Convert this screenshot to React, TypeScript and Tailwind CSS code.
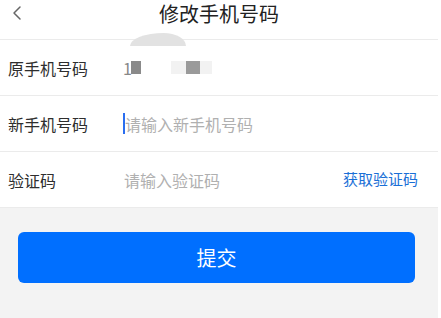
import { ChevronLeft } from 'lucide-react';

const font = { fontFamily: '"Noto Sans CJK SC", "Noto Sans", sans-serif' };

function Row({ label, children }: { label: string; children: React.ReactNode }) {
  return (
    <div className="flex items-center h-[56px] bg-white border-b border-[#ebebeb]">
      <div className="w-[123px] pl-[8px] text-[16px] text-[#2e2e2e]">{label}</div>
      <div className="flex-1 flex items-center min-w-0">{children}</div>
    </div>
  );
}

export default function App() {
  return (
    <div className="flex w-[441px] h-[318px] bg-white overflow-hidden" style={font}>
      <div className="w-[438px] h-full bg-[#f3f3f3] flex flex-col">
        {/* Header */}
        <div className="relative h-[40px] bg-white border-b border-[#ebebeb] flex justify-center pt-[3px]">
          <ChevronLeft className="absolute left-[5px] top-[1px] w-[24px] h-[24px] text-[#666]" strokeWidth={1.5} />
          <h1 className="text-[20px] text-[#222] leading-[22px]">修改手机号码</h1>
        </div>

        {/* Form */}
        <div className="relative">
          <div className="absolute left-[130px] top-[-7px] w-[56px] h-[13px] rounded-[60%_40%_0_0/100%_100%_0_0] bg-[#e2e2e2]" />
          <Row label="原手机号码">
            <span className="text-[16px] text-[#888]">1</span>
            <span className="w-[10px] h-[13px] bg-[#8a8a8a] ml-[-1px]" />
            <span className="ml-[30px] flex h-[13px]">
              <span className="w-[15px] bg-[#f2f2f2]" />
              <span className="w-[14px] bg-[#9a9a9a]" />
              <span className="w-[12px] bg-[#f2f2f2]" />
            </span>
          </Row>
          <Row label="新手机号码">
            <span className="w-[2px] h-[21px] bg-[#2a6ef0]" />
            <span className="text-[16px] text-[#b0b0b0]">请输入新手机号码</span>
          </Row>
          <Row label="验证码">
            <span className="flex-1 text-[16px] text-[#b0b0b0] pl-[1px]">请输入验证码</span>
            <span className="pr-[20px] text-[15px] text-[#1a6fd6]">获取验证码</span>
          </Row>
        </div>

        {/* Submit */}
        <div className="px-[18px] pt-[24px]">
          <button className="w-[397px] h-[51px] rounded-[6px] bg-[#006fff] text-white text-[20px]">
            提交
          </button>
        </div>
      </div>
    </div>
  );
}
